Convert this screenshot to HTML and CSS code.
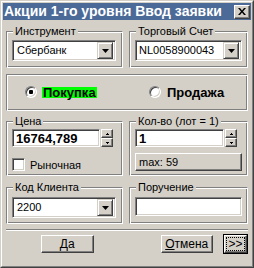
FILE: index.html
```html
<!DOCTYPE html>
<html>
<head>
<meta charset="utf-8">
<link rel="stylesheet" href="styles.css">
</head>
<body>
<div class="window">
  <div class="frame">
    <div class="titlebar">
      <span class="title">Акции 1-го уровня Ввод заявки</span>
      <span class="close"><svg width="8" height="7" viewBox="0 0 8 7"><path d="M0 0h2l2 2.4L6 0h2L5 3.5 8 7H6L4 4.6 2 7H0l3-3.5z" fill="#000"/></svg></span>
    </div>
    <div class="content">
      <div class="row row1">
        <div class="group g-left">
          <div class="legend">Инструмент</div>
          <div class="combo c1"><span class="val">Сбербанк</span><span class="dd"><svg width="7" height="4" viewBox="0 0 7 4"><path d="M0 0h7L3.5 4z" fill="#000"/></svg></span></div>
        </div>
        <div class="group g-right">
          <div class="legend">Торговый Счет</div>
          <div class="combo c2"><span class="val">NL0058900043</span><span class="dd"><svg width="7" height="4" viewBox="0 0 7 4"><path d="M0 0h7L3.5 4z" fill="#000"/></svg></span></div>
        </div>
      </div>
      <div class="group radios">
        <div class="radio-item first"><span class="radio checked"><i></i></span><span class="rtext hl">Покупка</span></div>
        <div class="radio-item"><span class="radio"></span><span class="rtext">Продажа</span></div>
      </div>
      <div class="row row3">
        <div class="group g-left">
          <div class="legend">Цена</div>
          <div class="spinrow">
            <div class="field f-price">16764,789</div>
            <div class="spin"><span class="sb"><svg width="3" height="2" viewBox="0 0 3 2"><path d="M1 0h1v1h1v1H0V1h1z" fill="#000"/></svg></span><span class="sb"><svg width="3" height="2" viewBox="0 0 3 2"><path d="M0 0h3v1H2v1H1V1H0z" fill="#000"/></svg></span></div>
          </div>
          <div class="check"><span class="box"></span><span>Рыночная</span></div>
        </div>
        <div class="group g-right">
          <div class="legend">Кол-во (лот = 1)</div>
          <div class="spinrow">
            <div class="field f-qty">1</div>
            <div class="spin"><span class="sb"><svg width="3" height="2" viewBox="0 0 3 2"><path d="M1 0h1v1h1v1H0V1h1z" fill="#000"/></svg></span><span class="sb"><svg width="3" height="2" viewBox="0 0 3 2"><path d="M0 0h3v1H2v1H1V1H0z" fill="#000"/></svg></span></div>
          </div>
          <div class="btn maxbtn">max: 59</div>
        </div>
      </div>
      <div class="row row4">
        <div class="group g-left">
          <div class="legend">Код Клиента</div>
          <div class="combo c1"><span class="val">2200</span><span class="dd"><svg width="7" height="4" viewBox="0 0 7 4"><path d="M0 0h7L3.5 4z" fill="#000"/></svg></span></div>
        </div>
        <div class="group g-right">
          <div class="legend">Поручение</div>
          <div class="field f-order"></div>
        </div>
      </div>
      <div class="sep"></div>
      <div class="buttons">
        <div class="btn b-ok"><span><u>Д</u>а</span></div>
        <div class="btn b-cancel"><span><u>О</u>тмена</span></div>
        <div class="btn-default"><div class="btn b-more"><span class="focus">&gt;&gt;</span></div></div>
      </div>
    </div>
  </div>
</div>
</body>
</html>
```

FILE: styles.css
```css
* { box-sizing: border-box; }
html, body { margin: 0; padding: 0; }
body {
  width: 254px; height: 268px; overflow: hidden;
  background: #d4d0c8;
  font-family: "Liberation Sans", Arial, sans-serif;
  font-size: 11px; color: #000;
}
.window {
  width: 254px; height: 268px;
  border: 1px solid; border-color: #d4d0c8 #404040 #404040 #d4d0c8;
}
.frame {
  height: 100%;
  border: 1px solid; border-color: #fff #808080 #808080 #fff;
  padding: 1px;
}
.titlebar {
  height: 17px; background: #4b6a98;
  display: flex; align-items: center; justify-content: space-between;
  padding: 0 1px 0 1px;
}
.title { color: #fff; font-weight: bold; font-size: 14px; white-space: nowrap; line-height: 17px; }
.close {
  width: 16px; height: 14px; background: #d4d0c8;
  border: 1px solid; border-color: #fff #404040 #404040 #fff;
  box-shadow: inset -1px -1px #808080;
  display: flex; align-items: center; justify-content: center;
}
.close svg { display: block; }
.content { padding: 0 3px; }
.row { display: flex; gap: 6px; }
.row1 { margin-top: 11px; }
.group {
  border: 1px solid; border-color: #808080 #fff #fff #808080;
  box-shadow: inset 1px 1px #fff, inset -1px -1px #808080;
  padding: 0 5px 0 5px;
}
.g-left { width: 117px; }
.g-right { width: 119px; }
.row1 .group, .row4 .group { height: 37px; }
.legend {
  margin: -7px 0 0 1px; padding: 0 2px;
  width: fit-content; background: #d4d0c8;
  line-height: 12px; height: 12px; white-space: nowrap;
}
.combo, .field {
  background: #fff;
  border: 1px solid; border-color: #808080 #fff #fff #808080;
  box-shadow: inset 1px 1px #404040, inset -1px -1px #d4d0c8;
}
.combo {
  height: 21px; margin-top: 3px; padding: 2px;
  display: flex; align-items: center; justify-content: space-between;
}
.combo .val { padding-left: 2px; line-height: 17px; }
.c2 .val { padding-left: 1px; }
.row1 .c1 { width: 104px; }
.row1 .c2 { width: 107px; }
.row4 .c1 { width: 104px; margin-top: 4px; }
.dd {
  width: 16px; height: 17px; background: #d4d0c8;
  border: 1px solid; border-color: #d4d0c8 #404040 #404040 #d4d0c8;
  box-shadow: inset 1px 1px #fff, inset -1px -1px #808080;
  display: flex; align-items: center; justify-content: center;
}
.dd svg { display: block; }
.radios {
  height: 37px; margin-top: 6px;
  display: flex; align-items: center; padding-left: 18px;
}
.radio-item { display: flex; align-items: center; }
.radio-item.first { width: 124px; }
.radio {
  width: 12px; height: 12px; border-radius: 50%;
  background: #fff;
  border: 1px solid; border-color: #808080 #fff #fff #808080;
  box-shadow: inset 1px 1px #404040, inset -1px -1px #d4d0c8;
  display: flex; align-items: center; justify-content: center;
  margin-top: -2px;
}
.radio i { width: 4px; height: 4px; background: #000; border-radius: 1px; display: block; }
.rtext {
  display: inline-block; font-weight: bold; font-size: 13px;
  margin-left: 5px; height: 11px; line-height: 11px; padding: 0 1px;
}
.hl { background: #00ff00; }
.row3 { margin-top: 10px; }
.row3 .group { height: 55px; }
.spinrow { display: flex; margin-top: 2px; gap: 1px; }
.field { height: 18px; padding: 0 3px; line-height: 17px; }
.f-price, .f-qty { font-weight: bold; font-size: 13px; }
.f-price { width: 88px; }
.f-qty { width: 89px; }
.spin { display: flex; flex-direction: column; width: 12px; height: 18px; }
.sb {
  height: 9px; background: #d4d0c8;
  border: 1px solid; border-color: #fff #404040 #404040 #fff;
  box-shadow: inset -1px -1px #808080;
  display: flex; align-items: center; justify-content: center;
}
.sb svg { display: block; }
.check { display: flex; align-items: center; margin-top: 11px; }
.box {
  width: 13px; height: 13px; background: #fff;
  border: 1px solid; border-color: #808080 #fff #fff #808080;
  box-shadow: inset 1px 1px #404040, inset -1px -1px #d4d0c8;
  margin-right: 5px;
}
.btn {
  background: #d4d0c8;
  border: 1px solid; border-color: #fff #404040 #404040 #fff;
  box-shadow: inset -1px -1px #808080;
  display: flex; align-items: center; justify-content: center;
}
.maxbtn { width: 107px; height: 18px; margin-top: 6px; justify-content: flex-start; padding-left: 3px; }
.row4 { margin-top: 11px; }
.f-order { width: 107px; height: 19px; margin-top: 4px; }
.sep { margin-top: 5px; border-top: 1px solid #808080; border-bottom: 1px solid #fff; }
.buttons { display: flex; align-items: center; margin-top: 3px; padding-left: 35px; font-size: 12px; }
.b-ok, .b-cancel { width: 54px; height: 18px; }
.b-cancel { margin-left: 67px; }
.btn-default { margin-left: 10px; border: 1px solid #000; width: 25px; height: 20px; }
.b-more { width: 23px; height: 18px; }
.focus { outline: 1px dotted #000; padding: 0 1px; line-height: 12px; }
```
